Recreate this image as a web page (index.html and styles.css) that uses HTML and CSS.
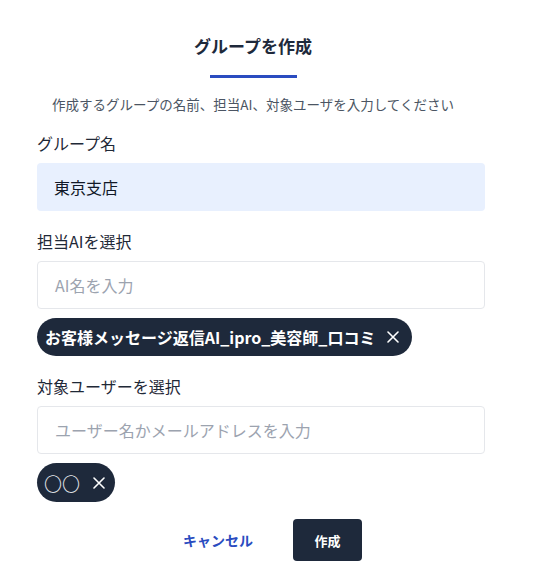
FILE: index.html
```html
<!DOCTYPE html>
<html lang="ja">
<head>
<meta charset="utf-8">
<link rel="stylesheet" href="styles.css">
</head>
<body>
<div class="modal">
  <div class="header">
    <h1 class="title">グループを作成</h1>
    <div class="underline"></div>
    <p class="subtitle">作成するグループの名前、担当AI、対象ユーザを入力してください</p>
  </div>
  <div class="form">
    <label class="label first">グループ名</label>
    <div class="input filled">東京支店</div>

    <label class="label">担当AIを選択</label>
    <div class="input placeholder">AI名を入力</div>
    <div class="chips">
      <span class="chip"><span class="chip-text">お客様メッセージ返信AI_ipro_美容師_口コミ</span>
        <svg class="x" viewBox="0 0 12 12" width="12" height="12"><path d="M1 1L11 11M11 1L1 11" stroke="#fff" stroke-width="1.6" stroke-linecap="round"/></svg></span>
    </div>

    <label class="label">対象ユーザーを選択</label>
    <div class="input placeholder">ユーザー名かメールアドレスを入力</div>
    <div class="chips">
      <span class="chip small"><span class="circles">〇〇</span>
        <svg class="x" viewBox="0 0 12 12" width="12" height="12"><path d="M1 1L11 11M11 1L1 11" stroke="#fff" stroke-width="1.6" stroke-linecap="round"/></svg></span>
    </div>

    <div class="footer">
      <button class="btn-cancel">キャンセル</button>
      <button class="btn-create">作成</button>
    </div>
  </div>
</div>
</body>
</html>
```
FILE: styles.css
```css
* { box-sizing: border-box; }
body {
  margin: 0;
  background: #ffffff;
  font-family: "Noto Sans CJK JP", "Noto Sans", sans-serif;
  color: #1f2937;
}
.modal {
  width: 540px;
  padding-top: 34px;
}
.header {
  width: 506px;
  text-align: center;
}
.title {
  margin: 0;
  font-size: 17px;
  line-height: 24px;
  font-weight: 700;
  color: #1e293b;
}
.underline {
  width: 87px;
  height: 3px;
  background: #2a4cc0;
  margin: 17px auto 0;
}
.subtitle {
  margin: 16px 0 0;
  font-size: 13.5px;
  line-height: 20px;
  color: #4b5563;
}
.form {
  width: 448px;
  margin-left: 37px;
  display: flex;
  flex-direction: column;
}
.label {
  display: block;
  margin-top: 19px;
  font-size: 16px;
  line-height: 22px;
  font-weight: 400;
  color: #1f2937;
}
.label.first { margin-top: 18px; }
.input {
  margin-top: 9px;
  height: 48px;
  border-radius: 4px;
  padding: 0 17px;
  display: flex;
  align-items: center;
  font-size: 16px;
}
.input.filled {
  background: #e8f0fe;
  color: #111827;
}
.input.placeholder {
  border: 1px solid #e5e7eb;
  color: #9ca3af;
  background: #fff;
}
.chips {
  margin-top: 9px;
  display: flex;
}
.chip {
  display: inline-flex;
  align-items: center;
  height: 38px;
  padding: 0 13px 0 8px;
  background: #1e293b;
  color: #ffffff;
  border-radius: 19px;
  font-size: 16px;
  font-weight: 700;
  gap: 12px;
  white-space: nowrap;
}
.chip.small {
  height: 39px;
  padding: 0 10px 0 7px;
  gap: 13px;
  border-radius: 20px;
}
.circles {
  font-weight: 300;
  font-size: 18px;
  color: #e5e7eb;
}
.x { flex: none; }
.footer {
  margin-top: 17px;
  display: flex;
  align-items: center;
  padding-left: 136px;
  gap: 30px;
}
.btn-cancel {
  border: none;
  background: none;
  font-family: inherit;
  font-size: 14px;
  font-weight: 700;
  color: #2a4cc0;
  padding: 0 10px;
  height: 42px;
  cursor: pointer;
}
.btn-create {
  border: none;
  background: #1e293b;
  color: #fff;
  font-family: inherit;
  font-size: 13px;
  font-weight: 700;
  width: 69px;
  height: 42px;
  border-radius: 4px;
}
```
